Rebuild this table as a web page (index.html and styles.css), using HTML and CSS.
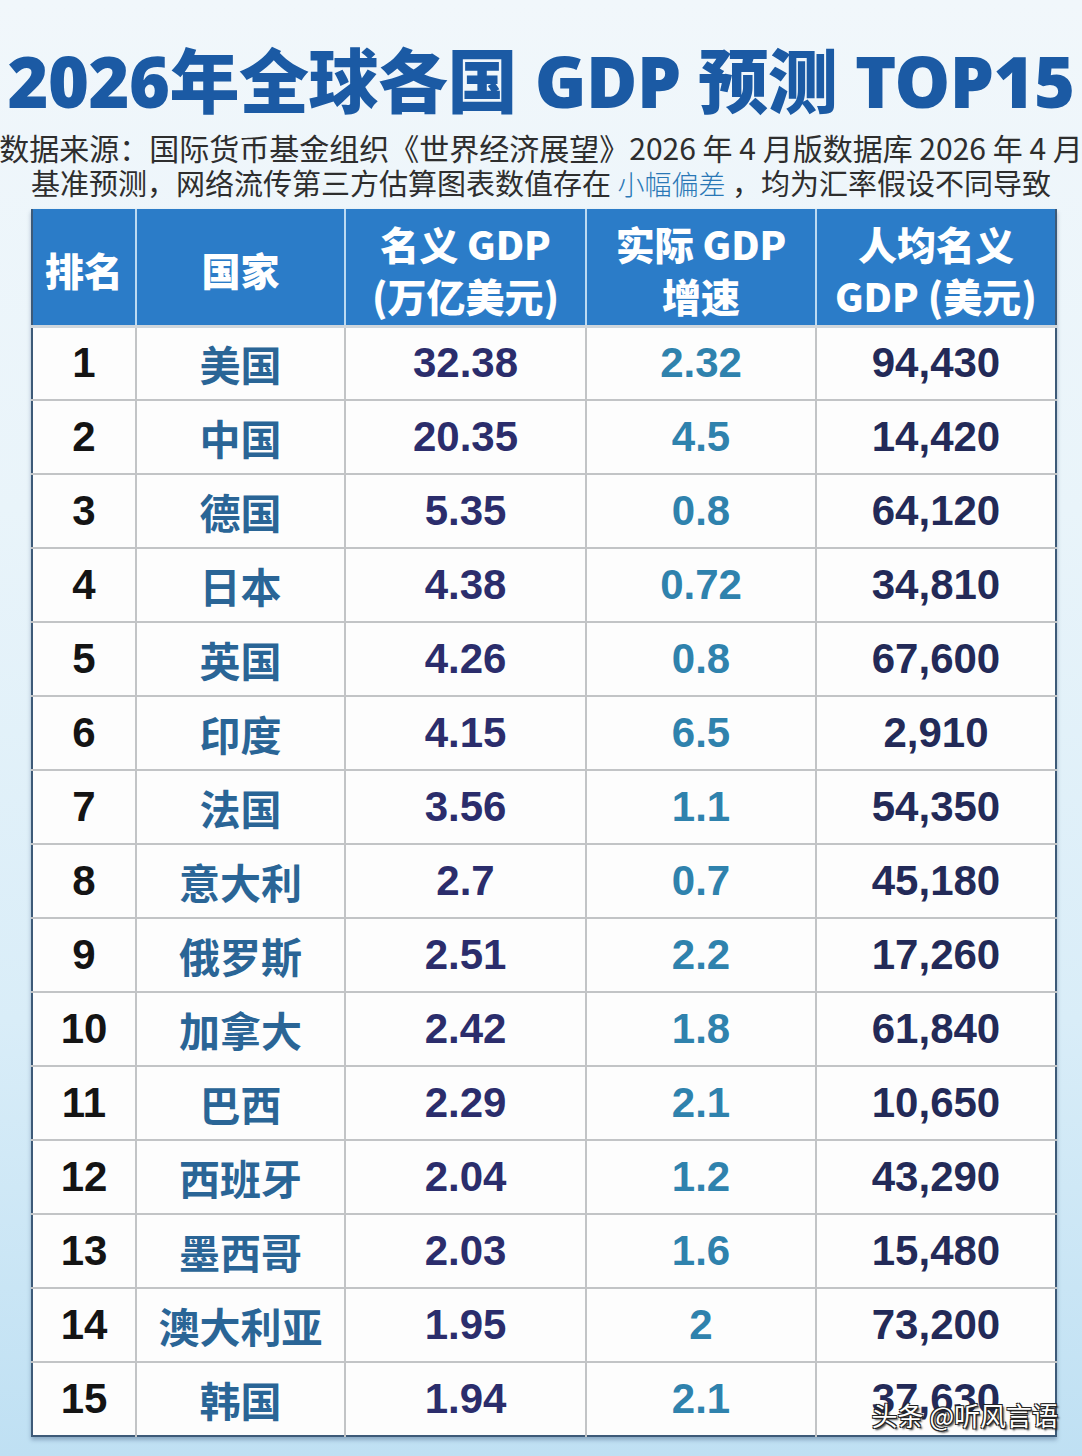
FILE: index.html
```html
<!DOCTYPE html>
<html lang="zh-CN">
<head>
<meta charset="utf-8">
<title>2026年全球各国 GDP 预测 TOP15</title>
<link rel="stylesheet" href="styles.css">
</head>
<body>
<div class="page">
  <h1 class="title">2026年全球各国 GDP 预测 TOP15</h1>
  <div class="src src1"><span>数据来源：国际货币基金组织《世界经济展望》2026 年 4 月版数据库 2026 年 4 月</span></div>
  <div class="src src2"><span>基准预测，网络流传第三方估算图表数值存在 <span class="hl">小幅偏差</span> ，均为汇率假设不同导致</span></div>
  <div class="table-wrap">
    <table class="gdp">
      <colgroup>
        <col class="c1"><col class="c2"><col class="c3"><col class="c4"><col class="c5">
      </colgroup>
      <thead>
        <tr>
          <th>排名</th>
          <th>国家</th>
          <th>名义 GDP<br>(万亿美元)</th>
          <th>实际 GDP<br>增速</th>
          <th>人均名义<br>GDP (美元)</th>
        </tr>
      </thead>
      <tbody>
        <tr><td class="rank">1</td><td class="cty">美国</td><td class="nom">32.38</td><td class="gr">2.32</td><td class="pc">94,430</td></tr>
        <tr><td class="rank">2</td><td class="cty">中国</td><td class="nom">20.35</td><td class="gr">4.5</td><td class="pc">14,420</td></tr>
        <tr><td class="rank">3</td><td class="cty">德国</td><td class="nom">5.35</td><td class="gr">0.8</td><td class="pc">64,120</td></tr>
        <tr><td class="rank">4</td><td class="cty">日本</td><td class="nom">4.38</td><td class="gr">0.72</td><td class="pc">34,810</td></tr>
        <tr><td class="rank">5</td><td class="cty">英国</td><td class="nom">4.26</td><td class="gr">0.8</td><td class="pc">67,600</td></tr>
        <tr><td class="rank">6</td><td class="cty">印度</td><td class="nom">4.15</td><td class="gr">6.5</td><td class="pc">2,910</td></tr>
        <tr><td class="rank">7</td><td class="cty">法国</td><td class="nom">3.56</td><td class="gr">1.1</td><td class="pc">54,350</td></tr>
        <tr><td class="rank">8</td><td class="cty">意大利</td><td class="nom">2.7</td><td class="gr">0.7</td><td class="pc">45,180</td></tr>
        <tr><td class="rank">9</td><td class="cty">俄罗斯</td><td class="nom">2.51</td><td class="gr">2.2</td><td class="pc">17,260</td></tr>
        <tr><td class="rank">10</td><td class="cty">加拿大</td><td class="nom">2.42</td><td class="gr">1.8</td><td class="pc">61,840</td></tr>
        <tr><td class="rank">11</td><td class="cty">巴西</td><td class="nom">2.29</td><td class="gr">2.1</td><td class="pc">10,650</td></tr>
        <tr><td class="rank">12</td><td class="cty">西班牙</td><td class="nom">2.04</td><td class="gr">1.2</td><td class="pc">43,290</td></tr>
        <tr><td class="rank">13</td><td class="cty">墨西哥</td><td class="nom">2.03</td><td class="gr">1.6</td><td class="pc">15,480</td></tr>
        <tr><td class="rank">14</td><td class="cty">澳大利亚</td><td class="nom">1.95</td><td class="gr">2</td><td class="pc">73,200</td></tr>
        <tr><td class="rank">15</td><td class="cty">韩国</td><td class="nom">1.94</td><td class="gr">2.1</td><td class="pc">37,630</td></tr>
      </tbody>
    </table>
    <div class="watermark">头条 @听风言语</div>
  </div>
</div>
</body>
</html>
```

FILE: styles.css
```css
* { box-sizing: border-box; }

html, body {
  margin: 0;
  padding: 0;
}

body {
  width: 1082px;
  height: 1456px;
  overflow: hidden;
  background: linear-gradient(to bottom, #f1f7fb 0%, #e9f4fa 35%, #d9edf8 70%, #bfe0f3 100%);
  font-family: "Noto Sans CJK SC", "Noto Sans", sans-serif;
}

.page {
  width: 1082px;
  height: 1456px;
  padding-top: 43px;
  overflow: hidden;
}

.title {
  margin: 0;
  height: 76px;
  line-height: 76px;
  text-align: center;
  font-family: "Noto Sans", "Noto Sans CJK SC", sans-serif;
  font-weight: 900;
  font-size: 70px;
  color: #1b5aa4;
  white-space: nowrap;
  letter-spacing: -0.5px;
}

.src {
  display: flex;
  justify-content: center;
  height: 35px;
  line-height: 35px;
  color: #2e2e2e;
  white-space: nowrap;
  overflow: visible;
}

.src1 { margin-top: 11px; font-size: 30px; }
.src2 { font-size: 29px; }

.src > span { flex: none; }

.hl {
  color: #2a78b6;
  font-size: 27px;
  font-weight: 300;
}

.table-wrap {
  position: relative;
  margin: 9px 0 0 31px;
  width: 1024px;
}

.gdp {
  width: 1024px;
  border-collapse: collapse;
  table-layout: fixed;
  background: #fdfdfd;
  border-left: 2px solid #3d5a78;
  border-right: 2px solid #3d5a78;
  border-bottom: 2px solid #3d5a78;
  box-shadow: 0 3px 4px rgba(40, 70, 110, 0.35);
}

.c1 { width: 104px; }
.c2 { width: 209px; }
.c3 { width: 241px; }
.c4 { width: 230px; }
.c5 { width: 240px; }

.gdp th {
  height: 117px;
  padding: 0;
  background: #2b7cc8;
  color: #fff;
  font-weight: 900;
  font-size: 39px;
  line-height: 52px;
  text-align: center;
  border-left: 2px solid #bcdaf2;
  border-bottom: 3px solid #cfd6dc;
  font-family: "Noto Sans CJK SC", "Noto Sans", sans-serif;
  padding-top: 4px;
}

.gdp th:first-child { border-left: none; }

.gdp td {
  height: 74px;
  padding: 0;
  text-align: center;
  border-left: 2px solid #c2c4c6;
  border-top: 2px solid #c2c4c6;
  font-family: "Liberation Sans", Arial, sans-serif;
  font-weight: 700;
  font-size: 42px;
}

.gdp td:first-child { border-left: none; }
.gdp tbody tr:first-child td { border-top: none; }

.rank { color: #141414; font-size: 40px; }
.cty {
  color: #2a6596;
  font-family: "Noto Sans CJK SC", sans-serif !important;
  font-size: 41px !important;
  font-weight: 700;
}
.nom { color: #2b2d6c; }
.gr { color: #2f82ad; }
.pc { color: #232a58; }

.watermark {
  position: absolute;
  right: -3px;
  bottom: 4px;
  font-size: 26px;
  font-weight: 400;
  color: #fff;
  font-family: "Noto Sans CJK SC", sans-serif;
  white-space: nowrap;
  text-shadow: 1px 1px 0 #222, -1px -1px 0 #222, 1px -1px 0 #222, -1px 1px 0 #222, 2px 2px 2px #222;
}
```
